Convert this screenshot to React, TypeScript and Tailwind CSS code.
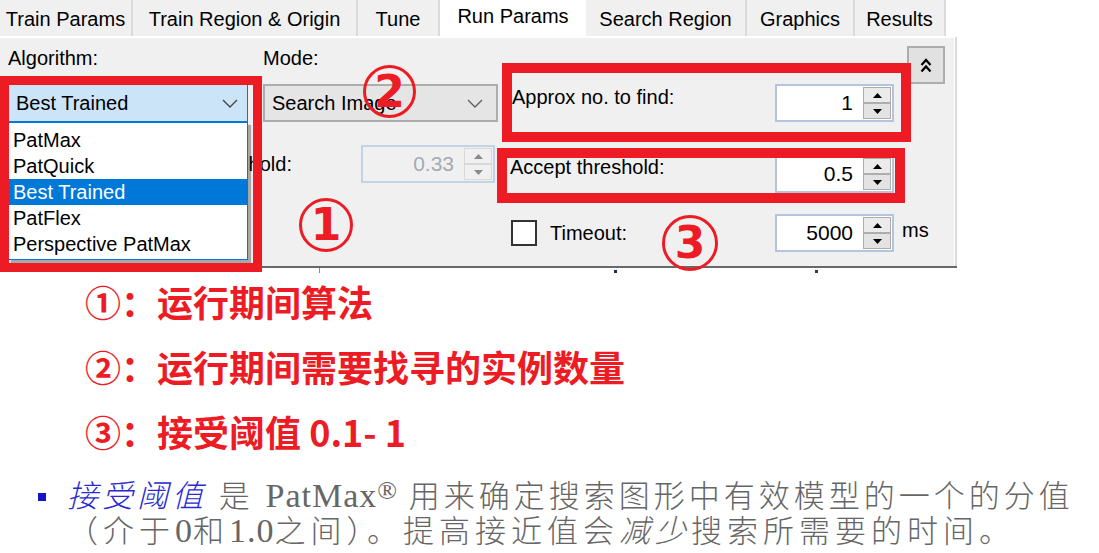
import React from 'react';

const TABS = [
    { label: 'Train Params', w: 'w-[133px]' },
    { label: 'Train Region & Origin', w: 'w-[225px]' },
    { label: 'Tune', w: 'w-[82px]' },
    { label: 'Run Params', w: 'w-[146px]', active: true },
    { label: 'Search Region', w: 'w-[161px]' },
    { label: 'Graphics', w: 'w-[108px]' },
    { label: 'Results', w: 'w-[91px]' },
];

const ALGORITHMS = ['PatMax', 'PatQuick', 'Best Trained', 'PatFlex', 'Perspective PatMax'];

function Chevron({ color }: { color: string }) {
    return (
        <svg width="16" height="9" viewBox="0 0 16 9" className="shrink-0">
            <polyline points="1,1 8,8 15,1" fill="none" stroke={color} strokeWidth="1.4" />
        </svg>
    );
}

function SpinArrow({ up, color }: { up?: boolean; color: string }) {
    return (
        <svg width="9" height="5" viewBox="0 0 9 5">
            <polygon points={up ? '0,5 4.5,0 9,5' : '0,0 4.5,5 9,0'} fill={color} />
        </svg>
    );
}

function SpinBox({ value, width, disabled }: { value: string; width: string; disabled?: boolean }) {
    return (
        <div
            className={`${width} h-[38px] border-2 flex ${disabled ? 'border-[#c3d2e6] bg-[#f0f0f0]' : 'border-[#b3c5de] bg-white'}`}
        >
            <span
                className={`flex-1 flex items-center justify-end pr-[10px] text-[21px] ${disabled ? 'text-[#a3aab5]' : 'text-black'}`}
            >
                {value}
            </span>
            <div className="w-[29px] flex flex-col py-[1px] pr-[1px]">
                <div className={`flex-1 flex items-center justify-center border ${disabled ? 'bg-[#f0f0f0] border-[#d8d8d8]' : 'bg-[#ebebeb] border-[#adadad]'}`}>
                    <SpinArrow up color={disabled ? '#8a8a8a' : '#000'} />
                </div>
                <div className={`flex-1 flex items-center justify-center border ${disabled ? 'bg-[#f0f0f0] border-[#d8d8d8]' : 'bg-[#e3e3e3] border-[#adadad]'}`}>
                    <SpinArrow color={disabled ? '#8a8a8a' : '#000'} />
                </div>
            </div>
        </div>
    );
}

function Marker({ n, pos }: { n: string; pos: string }) {
    return (
        <div
            className={`absolute ${pos} rounded-full border-[3px] border-[#ed1c24] flex items-center justify-center text-[#ed1c24] font-bold text-[44px] leading-none font-['DejaVu_Sans',sans-serif]`}
        >
            {n}
        </div>
    );
}

export default function App() {
    return (
        <div className="w-[1099px] h-[553px] bg-white overflow-hidden font-['Liberation_Sans',Arial,sans-serif] text-black">
            {/* SCREENSHOT */}
            <div className="relative w-[957px] h-[273px]">
                {/* tabs */}
                <div className="flex h-[36px] bg-white">
                    {TABS.map((t) =>
                        t.active ? (
                            <div key={t.label} className={`${t.w} h-[36px] bg-white flex justify-center pt-[1px] text-[20px]`}>
                                {t.label}
                            </div>
                        ) : (
                            <div
                                key={t.label}
                                className={`${t.w} h-[36px] bg-[#f0f0f0] border-r-2 border-[#dadada] flex items-center justify-center pt-[1px] text-[20px]`}
                            >
                                {t.label}
                            </div>
                        )
                    )}
                </div>

                {/* panel */}
                <div className="h-[230px] border-t-2 border-white border-r-2 border-r-[#d9d9d9]">
                    <div className="h-full bg-[#f0f0f0] border-r border-white flex text-[20px] leading-[20px]">
                        {/* algorithm */}
                        <div className="ml-[8px] w-[240px] flex flex-col">
                            <span className="mt-[10px]">Algorithm:</span>
                            <div className="relative mt-[16px]">
                                <div className="h-[38px] bg-[#cce4f7] border border-[#0078d7] flex items-center pl-[7px] pr-[9px]">
                                    <span className="flex-1">Best Trained</span>
                                    <Chevron color="#444" />
                                </div>
                                <div className="absolute top-[38px] left-0 w-[240px] bg-white border border-[#0078d7] pt-[4px] pb-[2px] shadow-[3px_3px_1px_rgba(0,0,0,0.3)] z-10">
                                    {ALGORITHMS.map((a) => (
                                        <div
                                            key={a}
                                            className={`h-[26px] flex items-center pl-[4px] ${a === 'Best Trained' ? 'bg-[#0078d7] text-white' : ''}`}
                                        >
                                            {a}
                                        </div>
                                    ))}
                                </div>
                            </div>
                        </div>

                        {/* mode */}
                        <div className="ml-[15px] w-[235px] flex flex-col">
                            <span className="mt-[10px]">Mode:</span>
                            <div className="mt-[16px] h-[38px] bg-[#e5e5e5] border-2 border-[#adadad] flex items-center pl-[7px] pr-[13px]">
                                <span className="flex-1">Search Image</span>
                                <Chevron color="#606060" />
                            </div>
                            <div className="mt-[23px] flex justify-end items-center pr-[3px] gap-[69px]">
                                <span className="whitespace-nowrap shrink-0">Contrast threshold:</span>
                                <div className="shrink-0">
                                    <SpinBox value="0.33" width="w-[134px]" disabled />
                                </div>
                            </div>
                        </div>

                        {/* params */}
                        <div className="ml-[12px] w-[435px] flex flex-col">
                            <button className="self-end mt-[8px] w-[38px] h-[38px] bg-[#e1e1e1] border-2 border-[#adadad] flex items-center justify-center">
                                <svg width="12" height="15" viewBox="0 0 12 15">
                                    <polyline points="1.5,7 6,2 10.5,7" fill="none" stroke="#000" strokeWidth="2.2" />
                                    <polyline points="1.5,13.5 6,8.5 10.5,13.5" fill="none" stroke="#000" strokeWidth="2.2" />
                                </svg>
                            </button>
                            <div className="grid grid-cols-[265px_119px_auto]">
                                <span className="self-start mt-[3px] pl-[2px]">Approx no. to find:</span>
                                <SpinBox value="1" width="w-[119px]" />
                            </div>
                            <div className="mt-[33px] grid grid-cols-[265px_119px_auto]">
                                <span className="self-start mt-[2px]">Accept threshold:</span>
                                <SpinBox value="0.5" width="w-[119px]" />
                            </div>
                            <div className="mt-[21px] grid grid-cols-[265px_119px_auto] items-center">
                                <div className="flex items-center">
                                    <span className="ml-[1px] w-[26px] h-[26px] border-2 border-[#333] bg-white" />
                                    <span className="ml-[13px]">Timeout:</span>
                                </div>
                                <SpinBox value="5000" width="w-[119px]" />
                                <span className="pl-[8px] -mt-[6px]">ms</span>
                            </div>
                        </div>
                    </div>
                </div>
                <div className="h-[2px] bg-[#696969]" />
                <div className="h-[5px] bg-white flex">
                    <span className="ml-[319px] w-[1px] bg-[#8a8a8a]" />
                    <span className="ml-[294px] mt-[2px] w-[3px] h-[3px] bg-[#1c2a6b]" />
                    <span className="ml-[198px] mt-[2px] w-[3px] h-[3px] bg-[#3a3a3a]" />
                </div>

                {/* annotations */}
                <div className="absolute left-0 top-[76px] w-[262px] h-[196px] border-[9px] border-[#ed1c24] z-20" />
                <div className="absolute left-[502px] top-[63px] w-[409px] h-[79px] border-[10px] border-[#ed1c24] z-20" />
                <div className="absolute left-[497px] top-[148px] w-[408px] h-[55px] border-[10px] border-[#ed1c24] z-20" />
                <Marker n="1" pos="left-[299px] top-[198px] w-[54px] h-[54px]" />
                <Marker n="2" pos="left-[363px] top-[65px] w-[53px] h-[53px]" />
                <Marker n="3" pos="left-[662px] top-[215px] w-[56px] h-[56px]" />
            </div>

            {/* NOTES */}
            <div className="mt-[11px] pl-[85px] flex flex-col gap-[31px] text-[#ed1c24] font-bold text-[36px] leading-[34px] font-['Noto_Sans_CJK_SC',sans-serif] whitespace-nowrap">
                <div>①：运行期间算法</div>
                <div>②：运行期间需要找寻的实例数量</div>
                <div>③：接受阈值 0.1- 1</div>
            </div>

            <div className="mt-[31px] pl-[38px] flex items-start">
                <span className="mt-[14px] w-[8px] h-[8px] bg-[#1515c8] shrink-0" />
                <div className="ml-[21px] text-[31px] leading-[34px] tracking-[4px] text-[#666] font-light font-['Liberation_Serif','Noto_Sans_CJK_SC',serif] whitespace-nowrap">
                    <div>
                        <span className="italic text-[#2a2ad4]">接受阈值</span> 是 <span className="text-[34px] tracking-[1px]">PatMax</span>
                        <sup className="text-[26px] tracking-normal relative -top-[8px]">®</sup> 用来确定搜索图形中有效模型的一个的分值
                    </div>
                    <div className="tracking-[5px]">
                        （介于<span className="text-[34px] tracking-[1px]">0</span>和<span className="text-[34px] tracking-[1px]">1.0</span>之间）。提高接近值会<span className="italic">减少</span>搜索所需要的时间。
                    </div>
                </div>
            </div>
        </div>
    );
}
